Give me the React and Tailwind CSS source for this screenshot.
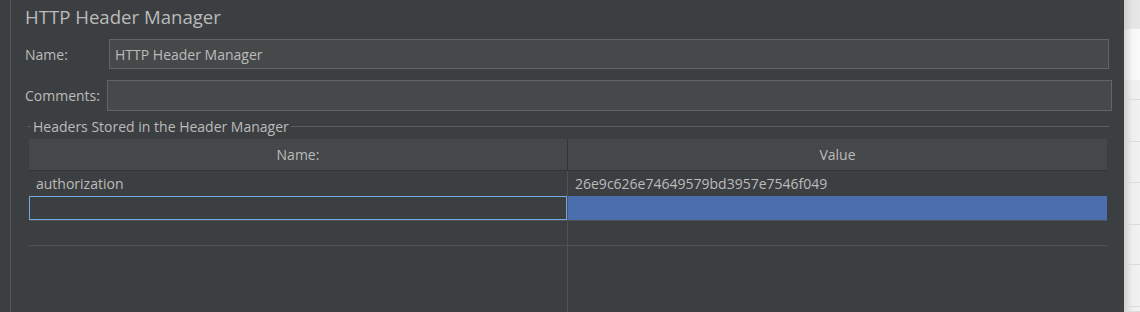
import React from "react";

const font = { fontFamily: '"Segoe UI", "Open Sans", "Noto Sans", sans-serif' };

function Field({ label, labelW, value, mr, h }) {
  return (
    <div className="flex items-center">
      <div className="text-[14px] text-[#bbbbbb] pl-[14px] shrink-0" style={{ width: labelW }}>
        {label}
      </div>
      <div
        className={`flex-1 flex items-center border border-[#646464] bg-[#45494a] px-[5px] text-[14px] text-[#bbbbbb] ${h}`}
        style={{ marginRight: mr }}
      >
        {value}
      </div>
    </div>
  );
}

function SidePanel() {
  const lineRows = [20, 42, 41, 42, 40, 42, 5];
  return (
    <div className="w-[16px] flex flex-col shrink-0">
      <div className="h-[29px] bg-linear-to-r from-[#cfcfcf] via-[#e4e4e4] to-[#e8e8e8]" />
      <div className="h-[51px] bg-linear-to-r from-[#d8d8d8] via-[#f6f6f6] to-[#fbfbfb]" />
      {lineRows.map((hh, i) => (
        <div
          key={i}
          className="bg-linear-to-r from-[#d2d2d2] via-[#eeeeee] to-[#f2f2f2] border-b border-[#dcdcdc]"
          style={{ height: hh }}
        />
      ))}
    </div>
  );
}

export default function App() {
  return (
    <div className="w-[1140px] h-[312px] flex bg-[#3c3f41] overflow-hidden" style={font}>
      <div className="w-[11px] border-r border-[#58595b] shrink-0" />
      <div className="flex-1 flex flex-col">
        <div className="h-[36px] pl-[14px] pt-[3px] text-[18.6px] leading-[28px] text-[#bbbbbb]">
          HTTP Header Manager
        </div>
        <div className="mt-[3px]">
          <Field label="Name:" labelW={98} value="HTTP Header Manager" mr={15} h="h-[30px]" />
        </div>
        <div className="mt-[11px]">
          <Field label="Comments:" labelW={96} value="" mr={12} h="h-[31px]" />
        </div>

        {/* titled border */}
        <div className="mt-[6px] flex items-start h-[20px] pl-[16px] pr-[15px]">
          <div className="w-[4px] h-px bg-[#5a5d5f] mt-[9px]" />
          <div className="px-[2px] text-[14px] leading-[20px] text-[#bbbbbb] whitespace-nowrap">
            Headers Stored in the Header Manager
          </div>
          <div className="flex-1 h-px bg-[#5a5d5f] mt-[9px]" />
        </div>

        {/* table */}
        <div className="mt-[2px] ml-[18px] mr-[17px] flex-1 flex flex-col text-[14px] text-[#bbbbbb]">
          <div className="h-[32px] flex bg-[#45484a] border-b border-[#313335]">
            <div className="w-[539px] flex items-center justify-center border-r border-[#313335]">Name:</div>
            <div className="flex-1 flex items-center justify-center">Value</div>
          </div>
          <div className="h-[25px] flex">
            <div className="w-[539px] border-r border-[#4e5254] pl-[7px] flex items-center">authorization</div>
            <div className="flex-1 pl-[7px] flex items-center">26e9c626e74649579bd3957e7546f049</div>
          </div>
          <div className="h-[25px] flex border-b border-[#4e5254]">
            <div className="w-[539px] border-r border-[#4e5254] flex">
              <div className="flex-1 border border-[#73aae6] bg-[#3c3f41]" />
            </div>
            <div className="flex-1 bg-[#4b6eaf]" />
          </div>
          <div className="h-[25px] flex border-b border-[#4e5254]">
            <div className="w-[539px] border-r border-[#4e5254]" />
            <div className="flex-1" />
          </div>
          <div className="flex-1 flex">
            <div className="w-[539px] border-r border-[#4e5254]" />
            <div className="flex-1" />
          </div>
        </div>
      </div>
      <SidePanel />
    </div>
  );
}
